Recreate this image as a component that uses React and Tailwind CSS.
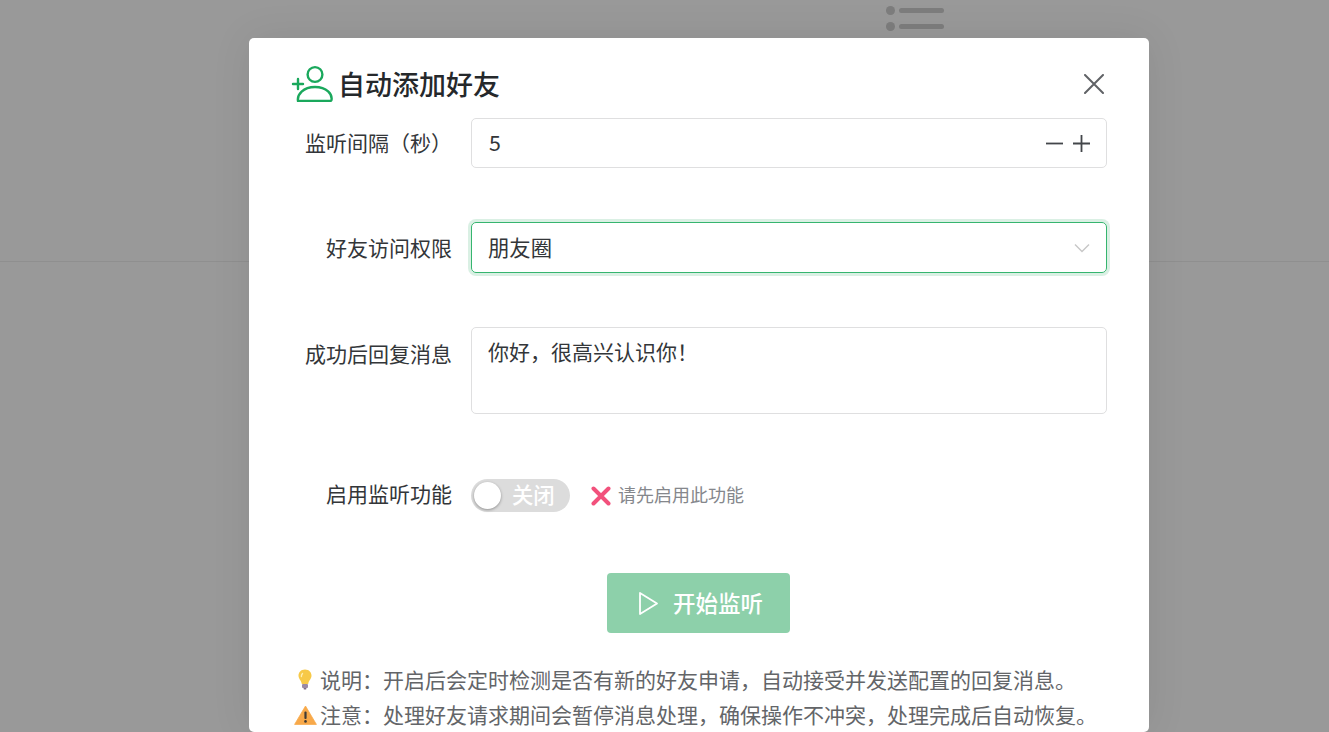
import React from "react";

const UserAddIcon = () => (
  <svg width="42" height="38" viewBox="0 0 42 38" fill="none" stroke="#1aa85c" strokeWidth="2.4" strokeLinecap="round" strokeLinejoin="round">
    <circle cx="24" cy="10.5" r="7.4" />
    <path d="M7 37 C6 30.5 12 23 24 23 C36 23 41.5 30.5 40.5 36 C40.3 36.8 39.8 37 39 37 Z" />
    <path d="M2 20 H12 M7 15 V25" />
  </svg>
);

const Bulb = () => (
  <svg className="-ml-[2px]" width="22" height="23" viewBox="0 0 22 22">
    <path d="M11 1 C6.8 1 4.5 4 4.5 7.2 C4.5 10.4 7.2 11.6 7.8 15.5 H14.2 C14.8 11.6 17.5 10.4 17.5 7.2 C17.5 4 15.2 1 11 1 Z" fill="#f7c948" />
    <path d="M8.5 5 C7.6 6 7.3 7 7.4 8" stroke="#ffeeb0" strokeWidth="1.4" fill="none" strokeLinecap="round" />
    <rect x="8" y="15.5" width="6" height="4" rx="1" fill="#9b8aa5" />
    <rect x="9.5" y="19.5" width="3" height="1.6" rx="0.8" fill="#7d6c88" />
  </svg>
);

const Warn = () => (
  <svg width="23" height="20" viewBox="0 0 23 20">
    <path d="M11.5 1 L22.4 19.4 H0.6 Z" fill="#f8a94a" stroke="#f8a94a" strokeWidth="0.8" strokeLinejoin="round" />
    <rect x="10.4" y="6.4" width="2.2" height="7.6" rx="1" fill="#3f3a35" />
    <circle cx="11.5" cy="16.4" r="1.3" fill="#3f3a35" />
  </svg>
);

const Row = ({ label, className = "", labelClass = "", children }) => (
  <div className={`flex ${className}`}>
    <div className={`w-[180px] shrink-0 pr-[19px] text-right text-[21px] text-[#333639] whitespace-nowrap ${labelClass}`}>{label}</div>
    <div className="flex-1 min-w-0">{children}</div>
  </div>
);

export default function App() {
  return (
    <div className="relative h-screen overflow-hidden bg-[#999999] font-['Noto_Sans_CJK_SC','Noto_Sans',sans-serif]">
      {/* page behind the mask */}
      <div className="h-[262px] border-b border-[#8f8f8f] pl-[886px] pt-[6px]">
        <div className="flex flex-col gap-[7px]">
          {[0, 1, 2].map((i) => (
            <div key={i} className="flex items-center gap-[4px]">
              <span className="w-[9px] h-[9px] rounded-full bg-[#7d7d7d]" />
              <span className="w-[45px] h-[5px] rounded-full bg-[#7d7d7d]" />
            </div>
          ))}
        </div>
      </div>

      {/* modal */}
      <div className="absolute inset-0 pl-[249px] pt-[38px]">
        <div className="w-[900px] rounded-[5px] bg-white pl-[42px] pr-[42px] shadow-[0_0_40px_rgba(0,0,0,0.08)]">
          <div className="flex items-center h-[80px] pt-[9px]">
            <UserAddIcon />
            <span className="ml-[5px] mt-[1px] text-[27px] font-medium text-[#25282b] leading-none">自动添加好友</span>
            <svg className="ml-auto mr-[3px] mt-[3px]" width="20" height="20" viewBox="0 0 20 20" stroke="#606266" strokeWidth="2" strokeLinecap="round">
              <path d="M1 1 L19 19 M19 1 L1 19" />
            </svg>
          </div>

          <Row label="监听间隔（秒）" className="h-[50px] items-center">
            <div className="flex h-[50px] items-center rounded-[5px] border border-[#dfdfe0] pl-[17px] pr-[16px] text-[21.33px] text-[#333639]">
              <span className="flex-1 pb-[2px]">5</span>
              <svg width="17" height="17" viewBox="0 0 17 17" stroke="#43464a" strokeWidth="1.8">
                <path d="M0 8.5 H17" />
              </svg>
              <svg className="ml-[10px]" width="17" height="17" viewBox="0 0 17 17" stroke="#43464a" strokeWidth="1.8">
                <path d="M0 8.5 H17 M8.5 0 V17" />
              </svg>
            </div>
          </Row>

          <Row label="好友访问权限" className="mt-[54px] h-[51px] items-center">
            <div className="flex h-[51px] items-center rounded-[5px] border-[1.5px] border-[#36b56f] pl-[16px] pr-[16px] text-[21.33px] text-[#333639] shadow-[0_0_0_3px_rgba(24,160,88,0.16)]">
              <span className="flex-1 pb-[2px]">朋友圈</span>
              <svg width="16" height="10" viewBox="0 0 16 10" fill="none" stroke="#c8c8c8" strokeWidth="1.5">
                <path d="M1 1.5 L8 8.5 L15 1.5" />
              </svg>
            </div>
          </Row>

          <Row label="成功后回复消息" className="mt-[54px]" labelClass="pt-[11px]">
            <div className="h-[87px] rounded-[5px] border border-[#dfdfe0] pl-[16px] pt-[8px] text-[21px] text-[#333639]">
              你好，很高兴认识你！
            </div>
          </Row>

          <Row label="启用监听功能" className="mt-[65px] h-[33px] items-center" labelClass="pb-[3px]">
            <div className="flex items-center">
              <div className="flex h-[33px] w-[99px] items-center rounded-full bg-[#dcdcdc] pl-[3px]">
                <span className="h-[27px] w-[27px] rounded-full bg-white shadow-[0_1px_3px_rgba(0,0,0,0.35)]" />
                <span className="ml-[11px] pb-[3px] text-[21.33px] text-white font-medium">关闭</span>
              </div>
              <svg className="ml-[21px]" width="20" height="20" viewBox="0 0 20 20" stroke="#f2517c" strokeWidth="4" strokeLinecap="round">
                <path d="M2.5 2.5 L17.5 17.5 M17.5 2.5 L2.5 17.5" />
              </svg>
              <span className="ml-[7px] pb-[2px] text-[18px] text-[#85878c]">请先启用此功能</span>
            </div>
          </Row>

          <div className="mt-[61px] flex justify-center -translate-x-[1px]">
            <div className="flex h-[60px] w-[183px] items-center justify-center rounded-[4px] bg-[#8dd0aa] pl-[5px] text-[22.5px] font-medium text-white">
              <svg width="21" height="25" viewBox="0 0 21 25" fill="none" stroke="white" strokeWidth="1.8" strokeLinejoin="round">
                <path d="M2 2 L19 12.5 L2 23 Z" />
              </svg>
              <span className="ml-[14px]">开始监听</span>
            </div>
          </div>

          <div className="mt-[29px] text-[21px] leading-[35px] text-[#636568] whitespace-nowrap">
            <div className="flex items-center">
              <span className="flex w-[29px] shrink-0 justify-center"><Bulb /></span>
              说明：开启后会定时检测是否有新的好友申请，自动接受并发送配置的回复消息。
            </div>
            <div className="flex items-center">
              <span className="flex w-[29px] shrink-0 justify-center"><Warn /></span>
              注意：处理好友请求期间会暂停消息处理，确保操作不冲突，处理完成后自动恢复。
            </div>
          </div>
        </div>
      </div>
    </div>
  );
}
